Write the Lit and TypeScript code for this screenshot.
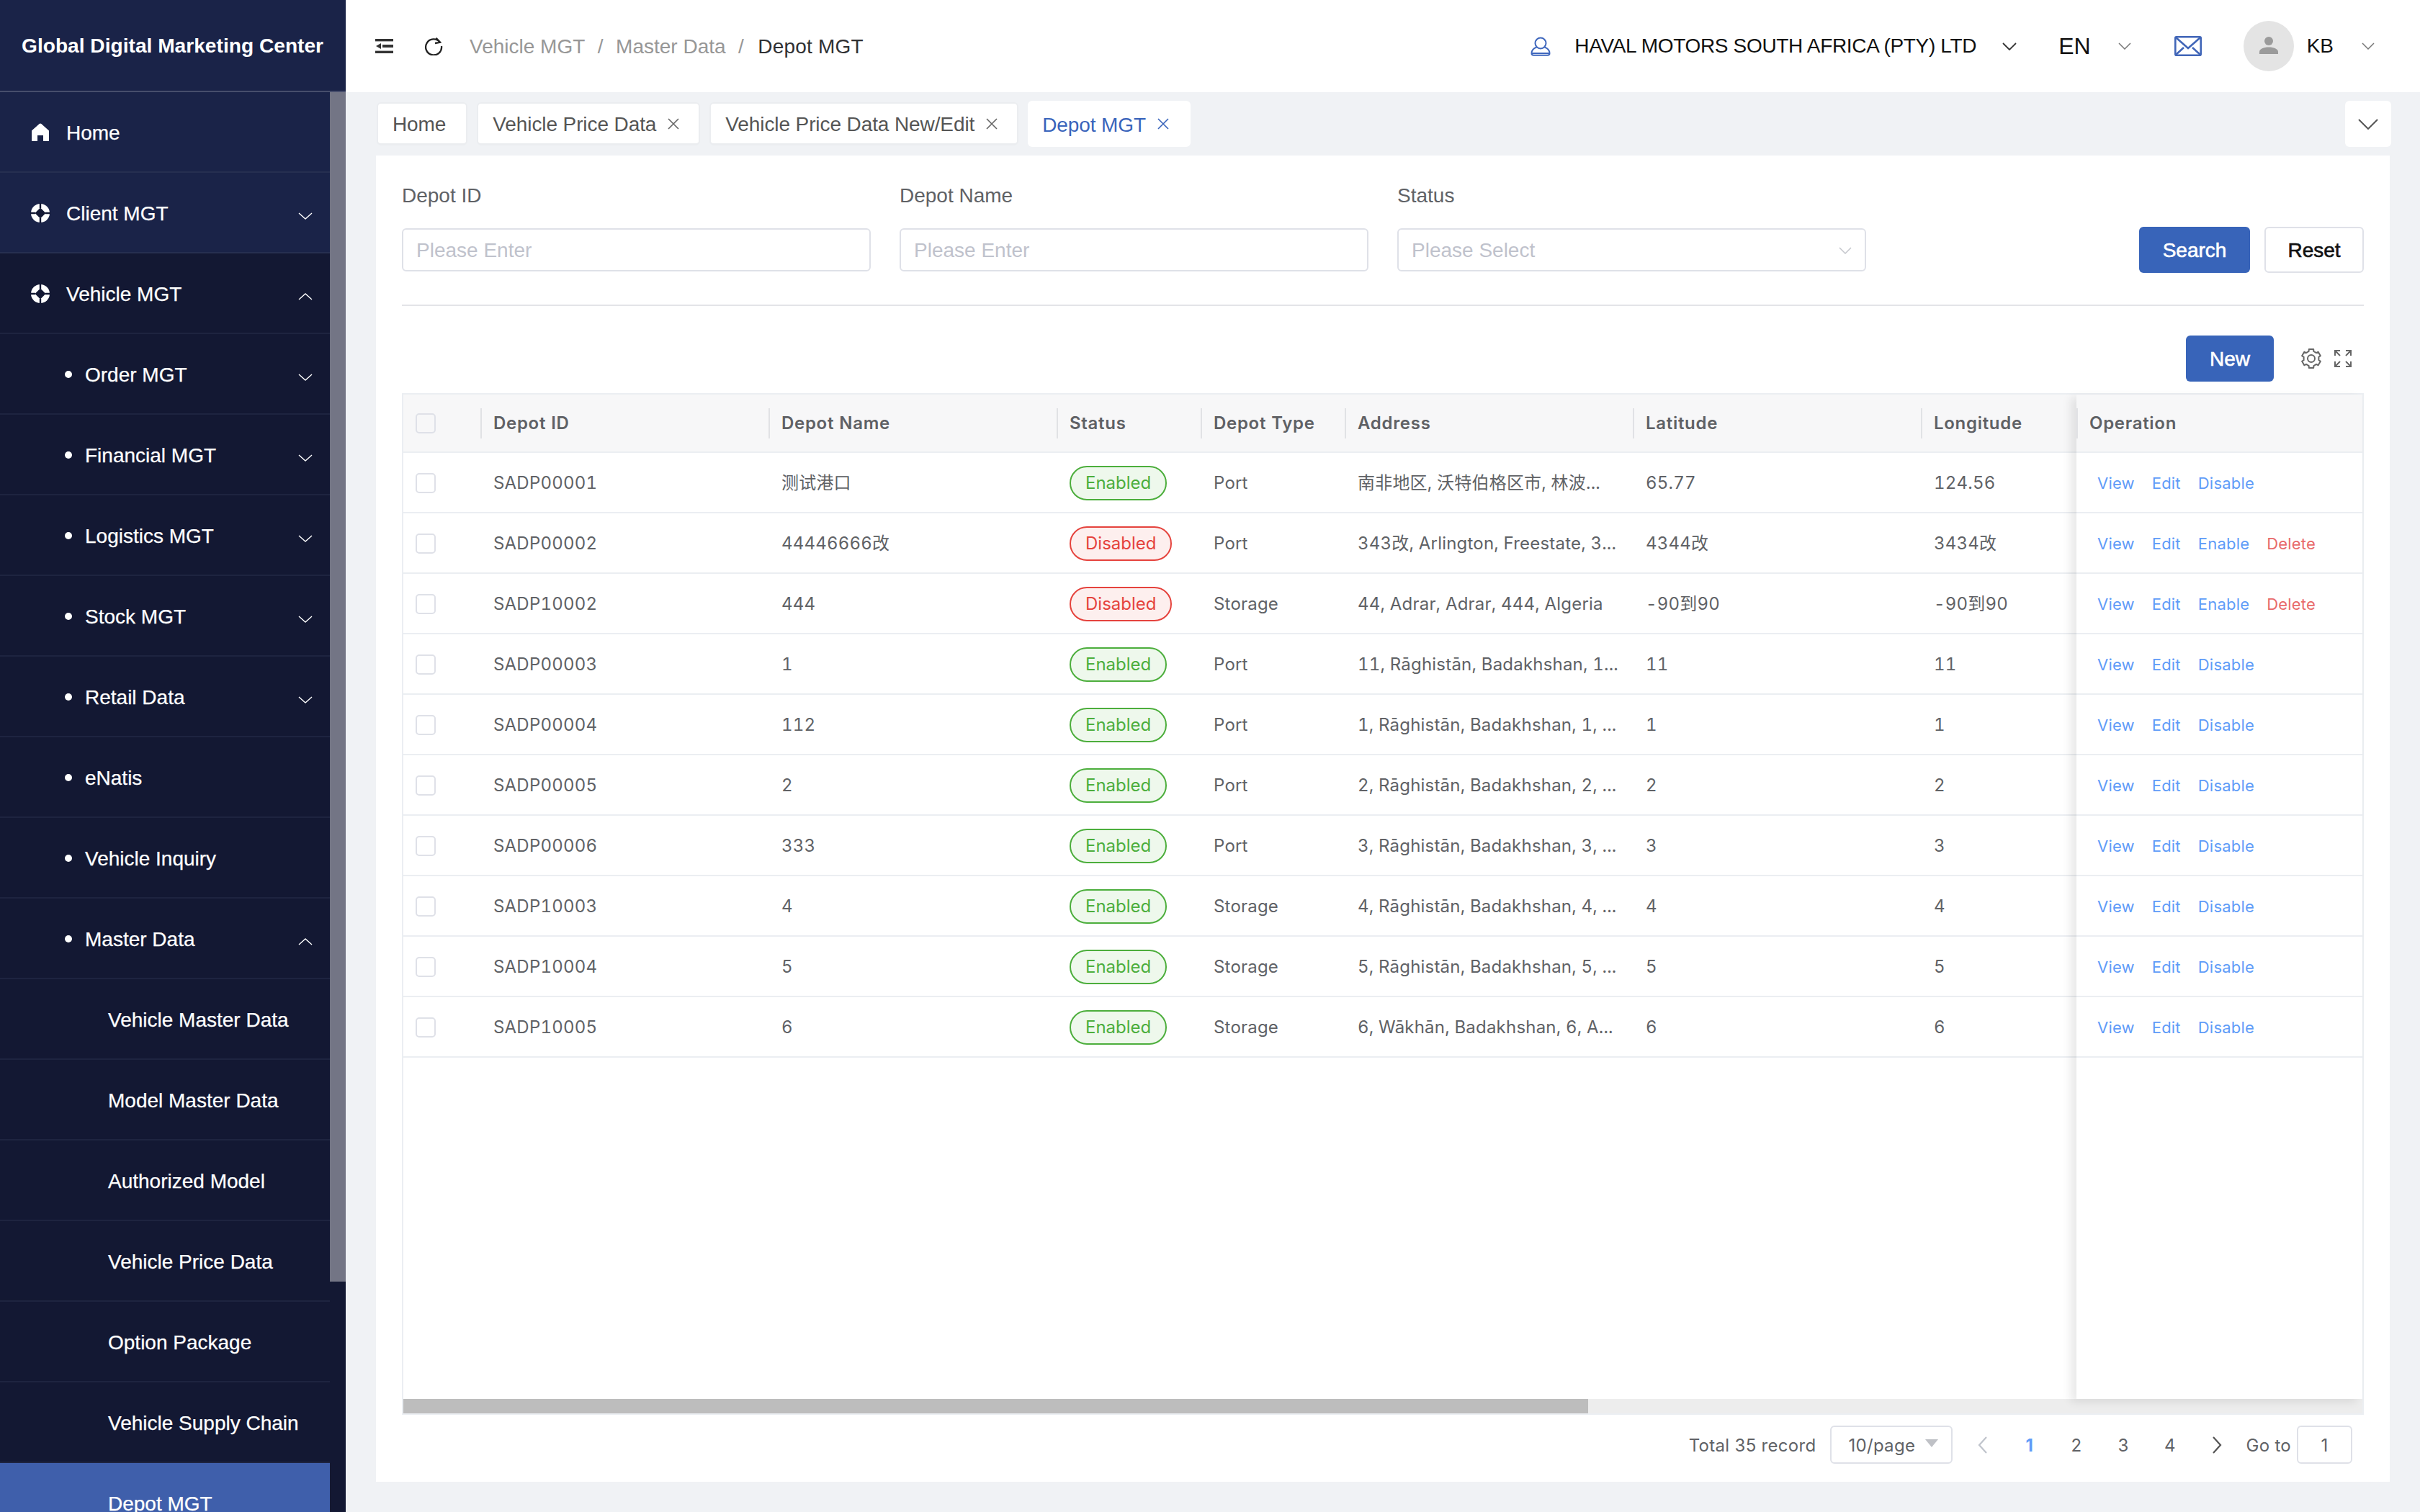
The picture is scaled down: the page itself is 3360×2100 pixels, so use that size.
import { LitElement, html, css, svg } from "lit";
import { customElement } from "lit/decorators.js";

type MenuRow = { label: string; level: number; icon?: string; chev?: "up" | "down"; dark?: boolean; active?: boolean };

const MENU: MenuRow[] = [
  { label: "Home", level: 1, icon: "home" },
  { label: "Client MGT", level: 1, icon: "ring", chev: "down" },
  { label: "Vehicle MGT", level: 1, icon: "ring", chev: "up", dark: true },
  { label: "Order MGT", level: 2, chev: "down", dark: true },
  { label: "Financial MGT", level: 2, chev: "down", dark: true },
  { label: "Logistics MGT", level: 2, chev: "down", dark: true },
  { label: "Stock MGT", level: 2, chev: "down", dark: true },
  { label: "Retail Data", level: 2, chev: "down", dark: true },
  { label: "eNatis", level: 2, dark: true },
  { label: "Vehicle Inquiry", level: 2, dark: true },
  { label: "Master Data", level: 2, chev: "up", dark: true },
  { label: "Vehicle Master Data", level: 3, dark: true },
  { label: "Model Master Data", level: 3, dark: true },
  { label: "Authorized Model", level: 3, dark: true },
  { label: "Vehicle Price Data", level: 3, dark: true },
  { label: "Option Package", level: 3, dark: true },
  { label: "Vehicle Supply Chain", level: 3, dark: true },
  { label: "Depot MGT", level: 3, active: true },
];

type Row = { id: string; name: string; on: boolean; type: string; addr: string; lat: string; lng: string };
const ROWS: Row[] = [
  { id: "SADP00001", name: "测试港口", on: true, type: "Port", addr: "南非地区, 沃特伯格区市, 林波...", lat: "65.77", lng: "124.56" },
  { id: "SADP00002", name: "44446666改", on: false, type: "Port", addr: "343改, Arlington, Freestate, 3...", lat: "4344改", lng: "3434改" },
  { id: "SADP10002", name: "444", on: false, type: "Storage", addr: "44, Adrar, Adrar, 444, Algeria", lat: "-90到90", lng: "-90到90" },
  { id: "SADP00003", name: "1", on: true, type: "Port", addr: "11, Rāghistān, Badakhshan, 1...", lat: "11", lng: "11" },
  { id: "SADP00004", name: "112", on: true, type: "Port", addr: "1, Rāghistān, Badakhshan, 1, ...", lat: "1", lng: "1" },
  { id: "SADP00005", name: "2", on: true, type: "Port", addr: "2, Rāghistān, Badakhshan, 2, ...", lat: "2", lng: "2" },
  { id: "SADP00006", name: "333", on: true, type: "Port", addr: "3, Rāghistān, Badakhshan, 3, ...", lat: "3", lng: "3" },
  { id: "SADP10003", name: "4", on: true, type: "Storage", addr: "4, Rāghistān, Badakhshan, 4, ...", lat: "4", lng: "4" },
  { id: "SADP10004", name: "5", on: true, type: "Storage", addr: "5, Rāghistān, Badakhshan, 5, ...", lat: "5", lng: "5" },
  { id: "SADP10005", name: "6", on: true, type: "Storage", addr: "6, Wākhān, Badakhshan, 6, A...", lat: "6", lng: "6" },
];

const chevron = (dir: "up" | "down", w: number, h: number, color: string, sw = 1.6) => html`<svg width=${w} height=${h} viewBox="0 0 ${w} ${h}" fill="none" stroke=${color} stroke-width=${sw}>
  ${dir === "down"
    ? svg`<polyline points="1,1 ${w / 2},${h - 1} ${w - 1},1"></polyline>`
    : svg`<polyline points="1,${h - 1} ${w / 2},1 ${w - 1},${h - 1}"></polyline>`}
</svg>`;

const closeX = () => html`<svg class="x" width="18" height="18" viewBox="0 0 18 18" fill="none" stroke="currentColor" stroke-width="1.6"><path d="M2 2 16 16M16 2 2 16"></path></svg>`;

function gearPoints(): string {
  const pts: string[] = [];
  for (let i = 0; i < 6; i++) {
    const a = (Math.PI / 3) * i - Math.PI / 2;
    const w = 0.24;
    const p = (r: number, t: number) => `${(15 + r * Math.cos(t)).toFixed(2)},${(15 + r * Math.sin(t)).toFixed(2)}`;
    pts.push(p(13.4, a - w), p(13.4, a + w), p(10.6, a + 0.52 - 0.2), p(10.6, a + 0.52 + 0.2));
  }
  return pts.join(" ");
}

@customElement("app-root")
export class AppRoot extends LitElement {
  static styles = css`
    :host { display: flex; width: 100%; height: 2100px; overflow: hidden; background: #f0f2f5; font-family: "Liberation Sans", "Noto Sans CJK SC", sans-serif; font-size: 28px; color: #606266; }
    * { box-sizing: border-box; }
    svg { display: block; flex: none; }

    .side { width: 480px; flex: none; display: flex; flex-direction: column; background: #131833; color: #fff; }
    .brand { height: 128px; flex: none; background: #1a2348; border-bottom: 2px solid #474e6c; padding: 2px 0 0 30px; display: flex; align-items: center; font-weight: 700; font-size: 28.150px; white-space: nowrap; }
    .side-body { flex: 1; display: flex; min-height: 0; }
    .menu { flex: 1; min-width: 0; overflow: hidden; }
    .rail { width: 22px; flex: none; }
    .thumb { height: 1652px; background: #737585; }
    .mi { height: 112px; display: flex; align-items: center; position: relative; padding-top: 3px; border-bottom: 2px solid #262f50; background: #1a2348; white-space: nowrap; }
    .mi.dark { background: #131833; border-bottom-color: #1e2440; }
    .mi.active { background: #3f5fab; border-bottom-color: #3f5fab; }
    .lv1 { padding-left: 92px; }
    .lv2 { padding-left: 118px; }
    .lv3 { padding-left: 150px; }
    .ico { position: absolute; left: 42px; top: 41px; }
    .dot { position: absolute; left: 90px; top: 51px; width: 10px; height: 10px; border-radius: 50%; background: #fff; }
    .chev { position: absolute; left: 414px; top: 55px; }
    .mi span { -webkit-text-stroke: 0.25px #fff; }

    .main { flex: 1; min-width: 0; display: flex; flex-direction: column; }
    .top { height: 128px; flex: none; background: #fff; display: flex; align-items: center; padding-left: 41px; white-space: nowrap; }
    .refresh { margin-left: 43px; }
    .crumbs { margin-left: 37px; padding-top: 2px; display: flex; align-items: center; color: #979797; }
    .crumbs i { font-style: normal; margin: 0 17.500px; color: #979797; }
    .crumbs b { font-weight: 400; color: #303133; letter-spacing: 0.2px; margin-left: 2px; }
    .top-right { margin-left: auto; display: flex; align-items: center; color: #111; }
    .company { margin-left: 33px; letter-spacing: -0.33px; }
    .c1 { margin-left: 36px; }
    .en { margin-left: 58px; font-size: 32px; }
    .c2 { margin-left: 38px; }
    .mail { margin-left: 60px; }
    .avatar { margin-left: 58px; width: 70px; height: 70px; border-radius: 50%; background: #e4e4e4; display: flex; align-items: center; justify-content: center; }
    .kb { margin-left: 18px; }
    .c3 { margin-left: 39px; margin-right: 63px; }

    .tabs { height: 88px; flex: none; display: flex; align-items: center; padding-left: 43px; white-space: nowrap; }
    .tab { height: 60px; display: flex; align-items: center; gap: 15px; padding: 3px 26px 0 20px; background: #fff; border: 2px solid #ebedf0; border-bottom-width: 3px; border-radius: 6px; margin-right: 13px; color: #555; letter-spacing: -0.1px; }
    .tab .x { color: #666; width: 18px; margin-top: -3px; }
    .tab.home { padding-right: 28px; }
    .tab.on { height: 64px; padding-right: 29px; color: #3964bb; border: none; }
    .tab.on .x { color: #3964bb; }
    .tab-more { margin-left: auto; margin-right: 40px; width: 64px; height: 64px; background: #fff; border-radius: 6px; display: flex; align-items: center; justify-content: center; }

    .card { flex: 1; min-height: 0; width: 2796px; margin-left: 42px; margin-bottom: 42px; background: #fff; padding: 36px 36px 25px; display: flex; flex-direction: column; }
    .filters { display: flex; align-items: flex-end; }
    .field { width: 651px; margin-right: 40px; padding-bottom: 2px; }
    .label { height: 40px; line-height: 40px; margin-bottom: 25px; color: #606266; }
    .input { height: 60px; border: 2px solid #dfe1e8; border-radius: 6px; padding: 2px 18px 0; display: flex; align-items: center; justify-content: space-between; color: #bfc2cc; background: #fff; }
    .btns { margin-left: auto; display: flex; gap: 20px; }
    .btn { height: 64px; padding-top: 2px; display: flex; align-items: center; justify-content: center; border-radius: 6px; -webkit-text-stroke: 0.6px currentColor; }
    .primary { background: #3864b9; color: #fff; }
    .search { width: 154px; }
    .reset { width: 138px; border: 2px solid #dfe1e8; color: #111; background: #fff; }
    .rule { height: 2px; margin-top: 44px; background: #e3e4e8; flex: none; }
    .tools { display: flex; align-items: center; justify-content: flex-end; margin-top: 41px; margin-bottom: 16px; padding-right: 17px; }
    .new { width: 122px; }
    .gear { margin-left: 37px; }
    .expand { margin-left: 17px; }

    .table { height: 1419px; flex: none; border: 2px solid #ebeef2; display: flex; flex-direction: column; font-family: Inter, "Noto Sans CJK SC", sans-serif; font-size: 24px; letter-spacing: 0.2px; font-feature-settings: "tnum"; }
    .t-body { height: 1395px; flex: none; display: flex; min-height: 0; }
    .t-left { width: 2323px; flex: none; overflow: hidden; }
    .t-fix { flex: 1; min-width: 0; background: #fff; box-shadow: -8px 4px 12px rgba(0, 0, 0, 0.09); position: relative; z-index: 1; }
    .hd { height: 81px; display: flex; align-items: center; background: #f7f7f8; border-bottom: 2px solid #ebeef2; font-weight: 600; color: #5f6165; letter-spacing: 0.7px; }
    .hc { height: 42px; flex: none; border-left: 2px solid #e1e2e5; padding-left: 16px; display: flex; align-items: center; white-space: nowrap; }
    .rw { height: 84px; padding-top: 2px; display: flex; align-items: center; border-bottom: 2px solid #ebeef2; }
    .cc { flex: none; padding-left: 18px; line-height: 32px; white-space: nowrap; color: #606266; }
    .w-check { width: 107px; padding-left: 17px; flex: none; }
    .w4 { width: 400px; }
    .w2 { width: 200px; }
    .w216 { width: 216px; }
    .box { width: 28px; height: 28px; border: 2px solid #dfe1e8; border-radius: 5px; background: #fff; }
    .hd .box { background: #f7f7f8; }
    .tag { display: inline-flex; align-items: center; height: 48px; padding: 0 20px; border-radius: 24px; border: 2px solid; letter-spacing: 0; vertical-align: middle; }
    .tag.ok { color: #4cae3c; border-color: #4cae3c; background: #eef8ec; }
    .tag.bad { color: #e5433d; border-color: #e5433d; background: #fdefee; }
    .ops { display: flex; gap: 24px; padding-left: 29px; font-size: 22px; letter-spacing: 0.2px; color: #5f9cf8; white-space: nowrap; }
    .del { color: #e86a6a; }
    .track { height: 20px; flex: none; background: #ededed; }
    .track div { width: 1645px; height: 100%; background: #bdbdbd; }

    .pager { height: 53px; flex: none; margin-top: 15px; padding-right: 16px; display: flex; align-items: center; justify-content: flex-end; font-family: Inter, sans-serif; font-size: 24px; letter-spacing: 0.3px; white-space: nowrap; color: #606266; }
    .pager > span { padding-top: 1px; }
    .psel { width: 170px; height: 53px; margin-left: 20px; margin-right: 9px; padding-top: 1px; border: 2px solid #dfe1e8; border-radius: 6px; display: flex; align-items: center; padding-left: 23px; gap: 14px; }
    .tri { width: 0; height: 0; border-left: 9px solid transparent; border-right: 9px solid transparent; border-top: 11px solid #bfc1c6; margin-top: -6px; }
    .pg { width: 65px; height: 53px; padding-top: 1px; display: flex; align-items: center; justify-content: center; }
    .pg.cur { color: #5f9cf8; font-weight: 700; }
    .goto { margin-left: 8px; }
    .pinp { width: 77px; height: 53px; margin-left: 8px; padding-top: 1px; border: 2px solid #dfe1e8; border-radius: 6px; display: flex; align-items: center; justify-content: center; }
  `;

  private icon(name?: string) {
    if (name === "home")
      return html`<svg class="ico" width="28" height="30" viewBox="0 0 28 30" fill="#fff"><path d="M14 2.500c.6 0 1 .2 1.400 .6L26 12.600V27h-8v-8h-8v8H2V12.600L12.600 3.100c.4-.4 .8-.6 1.400-.6z"></path></svg>`;
    if (name === "ring")
      return html`<svg class="ico" width="28" height="30" viewBox="0 0 28 30">
        <circle cx="14" cy="15" r="13" fill="#fff"></circle>
        <path d="M14 7.500 21.500 15 14 22.500 6.500 15Z" fill="#131833"></path>
        <path d="M14 1v7M14 22v7M0 15h7M21 15h7" stroke="#131833" stroke-width="2.400"></path>
      </svg>`;
    return null;
  }

  private menuRow(m: MenuRow) {
    return html`<div class="mi lv${m.level} ${m.dark ? "dark" : ""} ${m.active ? "active" : ""}">
      ${this.icon(m.icon)}
      ${m.level === 2 ? html`<i class="dot"></i>` : null}
      <span>${m.label}</span>
      ${m.chev ? html`<div class="chev">${chevron(m.chev, 20, 10, "#fff", 1.4)}</div>` : null}
    </div>`;
  }

  render() {
    return html`
      <aside class="side">
        <div class="brand">Global Digital Marketing Center</div>
        <div class="side-body">
          <div class="menu">${MENU.map((m) => this.menuRow(m))}</div>
          <div class="rail"><div class="thumb"></div></div>
        </div>
      </aside>
      <div class="main">
        <header class="top">
          <svg width="25" height="20" viewBox="0 0 25 20" fill="#333">
            <rect width="25" height="3.400"></rect><rect x="10" y="8" width="15" height="4"></rect><path d="M1 10 8 6v8z"></path><rect y="16.600" width="25" height="3.400"></rect>
          </svg>
          <svg class="refresh" width="26" height="26" viewBox="0 0 26 26" fill="none" stroke="#222" stroke-width="2.300">
            <path d="M21.700 7.600A11 11 0 1 0 24 13"></path><path d="M16.500 1.800 22 7.800l-7 1.200" stroke-width="2.300"></path>
          </svg>
          <nav class="crumbs"><span>Vehicle MGT</span><i>/</i><span>Master Data</span><i>/</i><b>Depot MGT</b></nav>
          <div class="top-right">
            <svg width="28" height="27" viewBox="0 0 28 27" fill="none" stroke="#3f67bd" stroke-width="2">
              <circle cx="14" cy="9" r="7.500"></circle><path d="M8.500 14.500C4.500 16 1.500 19 1.500 23c0 1.800 1 2.800 2.800 2.800h19.400c1.800 0 2.800-1 2.800-2.800 0-4-3-7-7-8.500M1.500 23h25"></path>
            </svg>
            <span class="company">HAVAL MOTORS SOUTH AFRICA (PTY) LTD</span>
            <div class="c1">${chevron("down", 20, 11, "#333", 1.8)}</div>
            <span class="en">EN</span>
            <div class="c2">${chevron("down", 18, 10, "#777", 1.5)}</div>
            <svg class="mail" width="38" height="28" viewBox="0 0 38 28" fill="none" stroke="#4166b8" stroke-width="2.600">
              <rect x="1.300" y="1.300" width="35.400" height="25.400" rx="1.500"></rect><path d="M2 2 19 17 36 2M2 26l11-10M36 26 25 16"></path>
            </svg>
            <div class="avatar"><svg width="28" height="28" viewBox="0 0 28 28" fill="#9b9b9b"><circle cx="14" cy="7" r="6"></circle><path d="M1 25v-3c0-4 6-6.500 13-6.500S27 18 27 22v3z"></path></svg></div>
            <span class="kb">KB</span>
            <div class="c3">${chevron("down", 18, 10, "#777", 1.5)}</div>
          </div>
        </header>

        <div class="tabs">
          <div class="tab home">Home</div>
          <div class="tab">Vehicle Price Data ${closeX()}</div>
          <div class="tab">Vehicle Price Data New/Edit ${closeX()}</div>
          <div class="tab on">Depot MGT ${closeX()}</div>
          <div class="tab-more">${chevron("down", 28, 15, "#555", 2)}</div>
        </div>

        <section class="card">
          <div class="filters">
            <div class="field"><div class="label">Depot ID</div><div class="input">Please Enter</div></div>
            <div class="field"><div class="label">Depot Name</div><div class="input">Please Enter</div></div>
            <div class="field"><div class="label">Status</div><div class="input">Please Select ${chevron("down", 18, 10, "#c4c6cc", 1.5)}</div></div>
            <div class="btns">
              <div class="btn primary search">Search</div>
              <div class="btn reset">Reset</div>
            </div>
          </div>
          <div class="rule"></div>
          <div class="tools">
            <div class="btn primary new">New</div>
            <svg class="gear" width="30" height="30" viewBox="0 0 30 30" fill="none" stroke="#666" stroke-width="2" stroke-linejoin="round">
              <polygon points=${gearPoints()}></polygon><circle cx="15" cy="15" r="5"></circle>
            </svg>
            <svg class="expand" width="24" height="24" viewBox="0 0 24 24" fill="none" stroke="#666" stroke-width="2">
              <path d="M1 8V1h7M1 1l7 7M16 1h7v7M23 1l-7 7M1 16v7h7M1 23l7-7M23 16v7h-7M23 23l-7-7"></path>
            </svg>
          </div>

          <div class="table">
            <div class="t-body">
              <div class="t-left">
                <div class="hd">
                  <div class="w-check"><div class="box"></div></div>
                  <div class="hc w4">Depot ID</div>
                  <div class="hc w4">Depot Name</div>
                  <div class="hc w2">Status</div>
                  <div class="hc w2">Depot Type</div>
                  <div class="hc w4">Address</div>
                  <div class="hc w4">Latitude</div>
                  <div class="hc w216">Longitude</div>
                </div>
                ${ROWS.map(
                  (r) => html`<div class="rw">
                    <div class="w-check"><div class="box"></div></div>
                    <div class="cc w4">${r.id}</div>
                    <div class="cc w4">${r.name}</div>
                    <div class="cc w2"><span class="tag ${r.on ? "ok" : "bad"}">${r.on ? "Enabled" : "Disabled"}</span></div>
                    <div class="cc w2">${r.type}</div>
                    <div class="cc w4">${r.addr}</div>
                    <div class="cc w4">${r.lat}</div>
                    <div class="cc w216">${r.lng}</div>
                  </div>`
                )}
              </div>
              <div class="t-fix">
                <div class="hd"><div class="hc">Operation</div></div>
                ${ROWS.map(
                  (r) => html`<div class="rw"><div class="ops">
                    <span>View</span><span>Edit</span>
                    ${r.on ? html`<span>Disable</span>` : html`<span>Enable</span><span class="del">Delete</span>`}
                  </div></div>`
                )}
              </div>
            </div>
            <div class="track"><div></div></div>
          </div>

          <div class="pager">
            <span>Total 35 record</span>
            <div class="psel">10/page <i class="tri"></i></div>
            <div class="pg"><svg width="14" height="24" viewBox="0 0 14 24" fill="none" stroke="#c0c4cc" stroke-width="2.200"><path d="M12 1 2 12l10 11"></path></svg></div>
            <div class="pg cur">1</div><div class="pg">2</div><div class="pg">3</div><div class="pg">4</div>
            <div class="pg"><svg width="14" height="24" viewBox="0 0 14 24" fill="none" stroke="#555" stroke-width="2.200"><path d="M2 1l10 11L2 23"></path></svg></div>
            <span class="goto">Go to</span>
            <div class="pinp">1</div>
          </div>
        </section>
      </div>
    `;
  }
}
